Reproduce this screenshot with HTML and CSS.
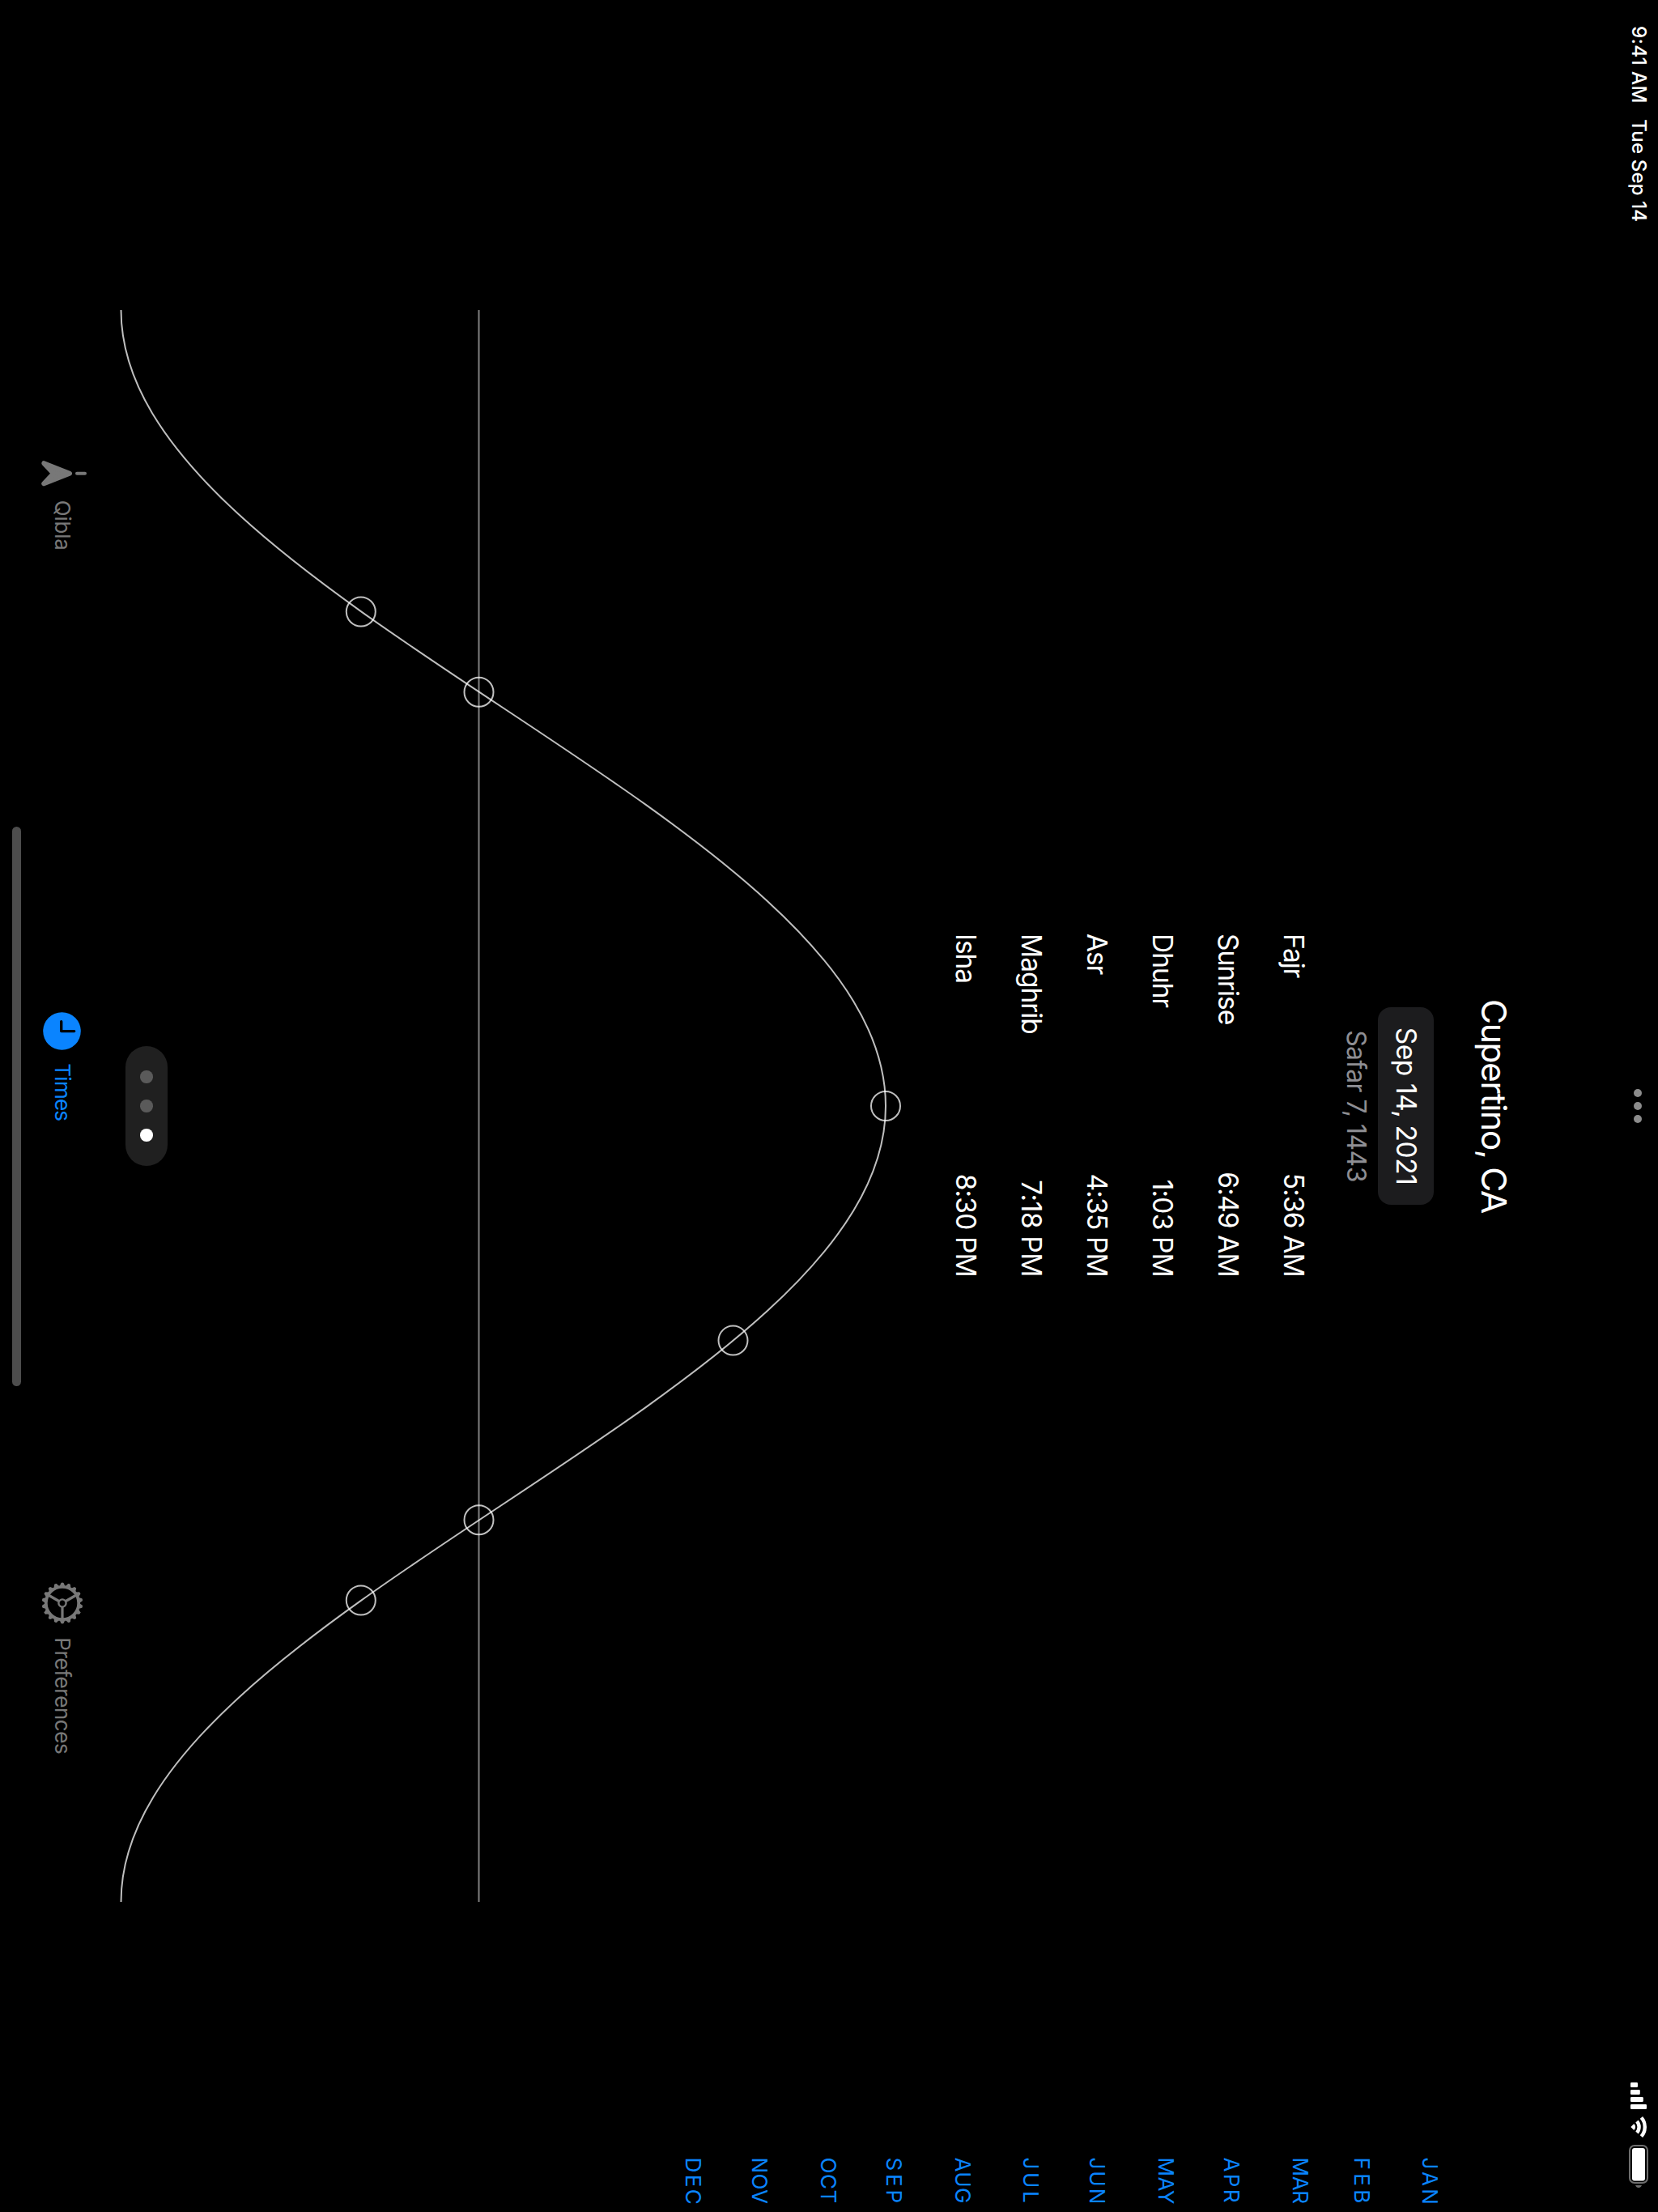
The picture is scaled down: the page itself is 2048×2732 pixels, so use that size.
FILE: index.html
```html
<!DOCTYPE html>
<html lang="en">
<head>
<meta charset="utf-8">
<title>Prayer Times</title>
<link rel="stylesheet" href="styles.css">
</head>
<body>
<div class="device">
<div class="screen">
  <header class="status">
    <div class="clock"><span class="clock-time">9:41 AM</span><span>Tue Sep 14</span></div>
    <div class="multitask"><i></i><i></i><i></i></div>
    <div class="indicators">
      <svg width="33" height="20" viewBox="0 0 33 20" fill="#fff">
        <rect x="0" y="11" width="6" height="9" rx="1.3"/><rect x="9" y="8.2" width="6" height="11.8" rx="1.3"/>
        <rect x="18" y="4.2" width="6" height="15.8" rx="1.3"/><rect x="27" y="0" width="6" height="20" rx="1.3"/>
      </svg>
      <svg width="28" height="20" viewBox="0 0 28 20" fill="none" stroke="#fff" stroke-width="4.4">
        <path d="M2.32 6.57A17.8 17.8 0 0 1 25.68 6.57"/><path d="M7 12.04A10.6 10.6 0 0 1 21 12.04"/>
        <path d="M14 19.2L10.6 15.8A4.8 4.8 0 0 1 17.4 15.8Z" fill="#fff" stroke-width="1" stroke-linejoin="round"/>
      </svg>
      <svg width="53" height="24" viewBox="0 0 53 24">
        <rect x="1" y="1" width="46" height="22" rx="6" fill="none" stroke="#6e6e6e" stroke-width="2"/>
        <rect x="4" y="4" width="40.5" height="16" rx="3" fill="#fff"/>
        <path d="M50 8Q53 9.2 53 12T50 16Z" fill="#6e6e6e"/>
      </svg>
    </div>
  </header>

  <main class="main">
    <h1 class="city">Cupertino, CA</h1>
    <div class="date">Sep 14, 2021</div>
    <div class="hijri">Safar 7, 1443</div>
    <dl class="times">
      <div class="row"><dt>Fajr</dt><dd>5:36 AM</dd></div>
      <div class="row"><dt>Sunrise</dt><dd>6:49 AM</dd></div>
      <div class="row"><dt>Dhuhr</dt><dd>1:03 PM</dd></div>
      <div class="row"><dt>Asr</dt><dd>4:35 PM</dd></div>
      <div class="row"><dt>Maghrib</dt><dd class="loose">7:18 PM</dd></div>
      <div class="row"><dt>Isha</dt><dd>8:30 PM</dd></div>
    </dl>
    <div class="chart">
      <svg class="sun" width="1966" height="945" viewBox="0 0 1966 945" fill="none" stroke="#fff" stroke-width="2">
        <path class="horizon" d="M0 502.5H1966"/>
        <path class="trace" d="M0 944.5C177.9 944.5 331.2 714.3 491.5 472.2S805.1 0 983 0S1314.2 230.1 1474.5 472.2S1788.1 944.5 1966 944.5"/>
        <g class="trace">
          <circle cx="372.5" cy="648.2" r="18"/><circle cx="471.7" cy="502.5" r="18"/><circle cx="983" cy="0" r="18"/>
          <circle cx="1272.6" cy="188.5" r="18"/><circle cx="1494.3" cy="502.5" r="18"/><circle cx="1593.5" cy="648.2" r="18"/>
        </g>
      </svg>
      <div class="pages"><i></i><i></i><i class="on"></i></div>
    </div>
  </main>

  <nav class="tabs">
    <div class="tab qibla">
      <svg width="32" height="60" viewBox="0 0 32 60" fill="#787878" stroke="#787878" stroke-linecap="round" stroke-linejoin="round">
        <path d="M15.7 2V12" stroke-width="4"/><path d="M15.7 21L3.2 52.7L15.7 41L28.2 52.7Z" stroke-width="6"/>
      </svg>
      <span>Qibla</span>
    </div>
    <div class="tab active">
      <svg width="47" height="47" viewBox="0 0 47 47" fill="none">
        <circle cx="23.5" cy="23.5" r="23.3" fill="#0a84ff"/>
        <path d="M11.8 24.3H23.6V8.3" stroke="#000" stroke-width="3.4" stroke-linecap="round" stroke-linejoin="round"/>
      </svg>
      <span>Times</span>
    </div>
    <div class="tab prefs">
      <svg width="52" height="52" viewBox="-26 -26 52 52" fill="#787878" stroke="#787878">
        <defs>
          <path id="tooth" stroke="none" d="M21-3.4L25-1.5Q25.8 0 25 1.5L21 3.4Z"/>
          <g id="teeth"><use href="#tooth"/><use href="#tooth" transform="rotate(20)"/><use href="#tooth" transform="rotate(40)"/></g>
        </defs>
        <use href="#teeth"/><use href="#teeth" transform="rotate(60)"/><use href="#teeth" transform="rotate(120)"/>
        <use href="#teeth" transform="rotate(180)"/><use href="#teeth" transform="rotate(240)"/><use href="#teeth" transform="rotate(300)"/>
        <circle r="20.2" fill="none" stroke-width="3.8"/>
        <circle r="4.6" fill="none" stroke-width="2.4"/>
        <path d="M5 0H20M-2.5 4.33L-10 17.3M-2.5-4.33L-10-17.3" stroke-width="3.2"/>
      </svg>
      <span>Preferences</span>
    </div>
  </nav>
  <div class="home"></div>

  <ol class="months">
    <li class="d31" style="letter-spacing:3.2px">JAN</li>
    <li class="d28" style="letter-spacing:4.4px">FEB</li>
    <li class="d31" style="letter-spacing:-.3px">MAR</li>
    <li class="d30" style="letter-spacing:2.4px">APR</li>
    <li class="d31" style="letter-spacing:.4px">MAY</li>
    <li class="d30" style="letter-spacing:2px">JUN</li>
    <li class="d31" style="letter-spacing:3.7px">JUL</li>
    <li class="d31" style="letter-spacing:.3px">AUG</li>
    <li class="d30" style="letter-spacing:3.8px">SEP</li>
    <li class="d31" style="letter-spacing:.6px">OCT</li>
    <li class="d30" style="letter-spacing:.4px">NOV</li>
    <li class="d31" style="letter-spacing:2.4px">DEC</li>
  </ol>
</div>
</div>
</body>
</html>
```
FILE: styles.css
```css
* { box-sizing: border-box; margin: 0; padding: 0; }
body { background: #000; }
svg { display: block; flex: none; overflow: visible; }

/* The landscape screen is turned a quarter clockwise inside the portrait frame. */
.device { width: 2048px; height: 2732px; overflow: hidden; background: #000; }
.screen {
  position: relative;
  width: 2732px; height: 2048px;
  display: flex; flex-direction: column;
  transform-origin: 0 0;
  transform: translateX(2048px) rotate(90deg);
  color: #fff;
  font-family: Inter, "Liberation Sans", sans-serif;
  font-weight: 400;
  white-space: nowrap;
}

.status { height: 48px; flex: none; padding: 0 30px; display: grid; grid-template-columns: 1fr auto 1fr; align-items: center; }
.clock { display: flex; gap: 19.5px; padding-left: 2px; font-size: 24px; font-weight: 500; line-height: 30px; letter-spacing: .15px; }
.clock-time { letter-spacing: .43px; }
.multitask { display: flex; gap: 6px; padding-top: 2px; }
.multitask i { width: 10px; height: 10px; border-radius: 50%; background: #8c8c8c; }
.indicators { display: flex; gap: 8px; justify-content: flex-end; align-items: center; }

.main { flex: none; display: flex; flex-direction: column; align-items: center; padding-top: 129px; }
.city { font-size: 42.6px; font-weight: 400; line-height: 52px; letter-spacing: -1.46px; }
.date {
  width: 244px; height: 69px; margin-top: 48px; padding-bottom: 1px;
  border-radius: 16px; background: #1c1c1e;
  font-size: 33.5px; line-height: 68px; letter-spacing: -.42px; text-align: center;
}
.hijri { margin-top: 7px; font-size: 32px; line-height: 40px; letter-spacing: -.59px; color: #8e8e93; }
.times { width: 424px; margin: 17px 2px 0 0; font-size: 33.5px; line-height: 81px; }
.row { display: flex; justify-content: space-between; }
.row dt { letter-spacing: -1.05px; }
.row dd { letter-spacing: -.85px; }
.row .loose { letter-spacing: -.45px; }

.chart { position: relative; margin-top: 58px; }
.horizon { opacity: .5; }
.trace { opacity: .75; }
.pages {
  position: absolute; left: 909px; top: 887px;
  width: 148px; height: 52px; border-radius: 26px; background: #202020;
  display: flex; gap: 20.6px; align-items: center; justify-content: center;
}
.pages i { width: 15.4px; height: 15.4px; border-radius: 50%; background: #5a5a5a; }
.pages .on { background: #fff; }

.tabs { flex: none; height: 102px; margin-top: 21px; padding-left: 569px; display: grid; grid-template-columns: 680.5px 704px auto; align-items: center; font-size: 26px; line-height: 32px; color: #787878; }
.tab { display: flex; align-items: center; gap: 16.8px; letter-spacing: -.43px; }
.qibla { letter-spacing: -.25px; }
.active { color: #0a84ff; letter-spacing: -.75px; }
.home { flex: none; align-self: center; width: 691px; height: 11px; border-radius: 5.5px; background: #4d4d4d; }

.months { position: absolute; left: 2664.5px; top: 266.5px; list-style: none; font-size: 26px; line-height: 30px; color: #0a84ff; }
.d28 { height: 76.3px; }
.d30 { height: 81.7px; }
.d31 { height: 84.5px; }
```
